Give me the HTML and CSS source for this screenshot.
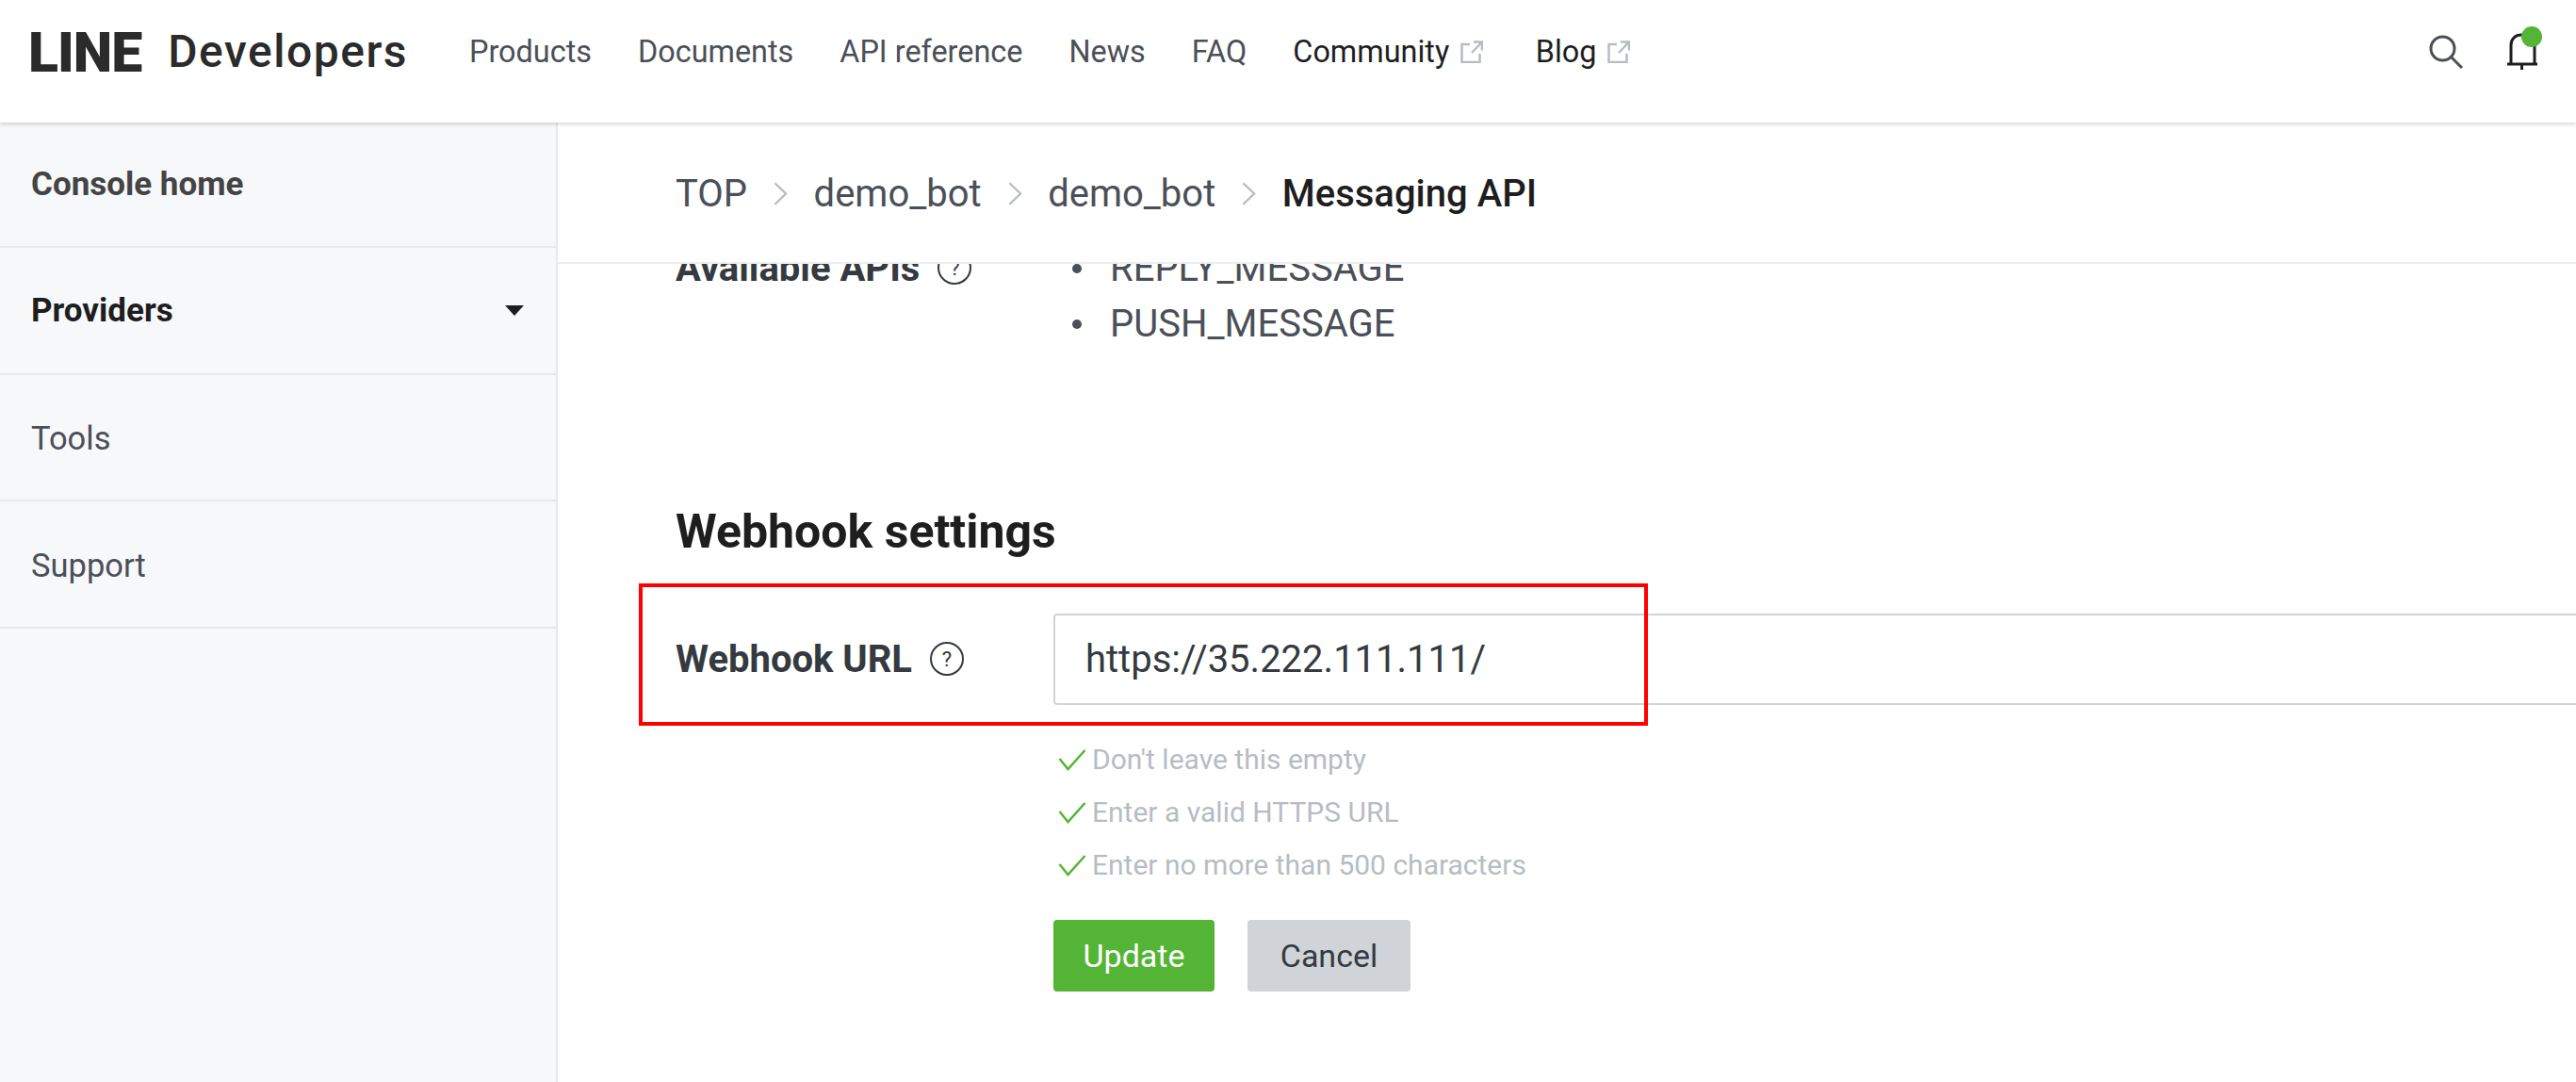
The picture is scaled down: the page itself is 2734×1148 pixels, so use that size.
FILE: index.html
```html
<!DOCTYPE html>
<html lang="en">
<head>
<meta charset="utf-8">
<title>LINE Developers</title>
<link rel="stylesheet" href="styles.css">
</head>
<body>
<header class="topbar">
  <a class="logo"><span class="logo-line">LINE</span><span class="logo-dev">Developers</span></a>
  <nav class="nav">
    <a>Products</a>
    <a>Documents</a>
    <a>API reference</a>
    <a>News</a>
    <a>FAQ</a>
    <a class="ext">Community <svg class="ext-icon" viewBox="0 0 24 24"><path d="M10 4H1.500v19h19v-9M12 13 22.500 2M14 1.500h9v9"/></svg></a>
    <a class="ext">Blog <svg class="ext-icon" viewBox="0 0 24 24"><path d="M10 4H1.500v19h19v-9M12 13 22.500 2M14 1.500h9v9"/></svg></a>
  </nav>
  <div class="tools">
    <svg class="search" viewBox="0 0 36 36"><circle cx="14.500" cy="14.500" r="12.500"/><path d="M23.500 23.500 35 35"/></svg>
    <svg class="bell" viewBox="0 0 38 54"><path d="M1 40h32M5 40V20C5 13 10 9 16 9h3c6 0 11 4 11 11v20M16.500 41v5"/><circle class="bell-dot" cx="27" cy="11" r="11"/></svg>
  </div>
</header>
<div class="shell">
  <aside class="sidebar">
    <a class="side-item strong">Console home</a>
    <a class="side-item active">Providers<span class="caret"></span></a>
    <a class="side-item">Tools</a>
    <a class="side-item">Support</a>
  </aside>
  <main class="main">
    <div class="crumbs">
      <a>TOP</a><svg class="chev" viewBox="0 0 16 26"><path d="M1.500 1 14 13 1.500 25"/></svg>
      <a>demo_bot</a><svg class="chev" viewBox="0 0 16 26"><path d="M1.500 1 14 13 1.500 25"/></svg>
      <a>demo_bot</a><svg class="chev" viewBox="0 0 16 26"><path d="M1.500 1 14 13 1.500 25"/></svg>
      <b>Messaging API</b>
    </div>
    <div class="scroller">
      <section class="content">
        <div class="row api-row">
          <div class="label">Available APIs <span class="help">?</span></div>
          <ul class="apis">
            <li>REPLY_MESSAGE</li>
            <li>PUSH_MESSAGE</li>
          </ul>
        </div>
        <h2 class="title">Webhook settings</h2>
        <div class="row url-row">
          <div class="label url-label">Webhook URL <span class="help">?</span></div>
          <div class="field"><input class="input" type="text" value="https://35.222.111.111/"></div>
          <div class="callout"></div>
        </div>
        <div class="row">
          <div></div>
          <div>
            <ul class="checks">
              <li><svg class="tick" viewBox="0 0 30 24"><path d="M1.500 11 10.500 22 28.500 2"/></svg>Don't leave this empty</li>
              <li><svg class="tick" viewBox="0 0 30 24"><path d="M1.500 11 10.500 22 28.500 2"/></svg>Enter a valid HTTPS URL</li>
              <li><svg class="tick" viewBox="0 0 30 24"><path d="M1.500 11 10.500 22 28.500 2"/></svg>Enter no more than 500 characters</li>
            </ul>
            <div class="actions">
              <button class="btn primary">Update</button>
              <button class="btn">Cancel</button>
            </div>
          </div>
        </div>
      </section>
    </div>
  </main>
</div>
</body>
</html>
```
FILE: styles.css
```css
* { box-sizing: border-box; }
html, body { margin: 0; height: 100%; overflow: hidden; }
body { font-family: Roboto, "Liberation Sans", sans-serif; color: #1e1e1e; background: #fff; display: flex; flex-direction: column; }

.topbar { height: 130px; flex: none; display: flex; align-items: center; padding: 0 36px 20px 30px; background: #fff; box-shadow: 0 2px 4px rgba(0,0,0,.16); position: relative; z-index: 2; }
.logo { display: flex; align-items: center; width: 468px; color: #2b2b2b; }
.logo-line { font-size: 59px; font-weight: 900; letter-spacing: -1px; line-height: 1; }
.logo-dev { font-size: 48px; font-weight: 500; letter-spacing: 1.500px; margin-left: 28px; line-height: 1; }
.nav { display: flex; gap: 49px; font-size: 32.400px; color: #4b5058; }
.nav a { display: flex; align-items: center; gap: 12px; }
.nav .ext { color: #1e1e1e; margin-right: 6.500px; }
.ext-icon { width: 24px; height: 24px; fill: none; stroke: #b7bcc4; stroke-width: 2.500; }
.tools { margin-left: auto; display: flex; align-items: center; gap: 46px; }
.search { width: 36px; height: 36px; fill: none; stroke: #4b5058; stroke-width: 3; }
.bell { width: 38px; height: 54px; fill: none; stroke: #1e1e1e; stroke-width: 3; }
.bell-dot { fill: #54b435; stroke: none; }

.shell { flex: 1; display: flex; min-height: 0; }
.sidebar { width: 592px; flex: none; background: #f7f8fa; border-right: 2px solid #e6e9ed; }
.side-item { height: 134.500px; display: flex; align-items: center; justify-content: space-between; padding: 3px 34px 0 33px; font-size: 34.500px; color: #4b5058; border-bottom: 2px solid #e6e9ed; }
.side-item.strong { font-weight: 700; font-size: 35px; color: #444; height: 133px; padding-top: 0; }
.side-item.active { font-weight: 700; font-size: 35px; color: #1e1e1e; padding-top: 0; }
.caret { width: 0; height: 0; border-left: 10px solid transparent; border-right: 10px solid transparent; border-top: 11px solid #1e1e1e; }

.main { flex: 1; min-width: 0; display: flex; flex-direction: column; }
.crumbs { height: 150px; flex: none; display: flex; align-items: center; padding: 2px 0 0 125px; font-size: 40px; color: #4b5058; border-bottom: 2px solid #eceef0; }
.crumbs b { font-weight: 500; color: #1e1e1e; }
.chev { width: 15px; height: 25px; margin: 0 27.500px 0 28px; fill: none; stroke: #b7bcc4; stroke-width: 2.500; }

.scroller { flex: 1; overflow: hidden; padding-left: 125px; }
.content { margin-top: -25px; width: 2100px; }
.row { display: grid; grid-template-columns: 401px 1fr; position: relative; }
.label { font-size: 40px; font-weight: 700; color: #343a40; display: flex; align-items: center; gap: 19px; }
.api-row { height: 279px; align-items: start; }
.api-row .label { height: 58px; }
.apis { margin: 0; padding: 0 0 0 60px; font-size: 40px; color: #4b5058; line-height: 59px; list-style: none; }
.apis li { position: relative; }
.apis li::before { content: ""; position: absolute; left: -40px; top: 25px; width: 10px; height: 10px; border-radius: 50%; background: #4b5058; }
.help { width: 36px; height: 36px; border: 2.500px solid #343a40; border-radius: 50%; font-size: 22px; font-weight: 400; display: inline-flex; align-items: center; justify-content: center; }
.title { margin: 0 0 56.500px; font-size: 50px; line-height: 60px; font-weight: 700; color: #1e1e1e; }
.url-row { align-items: center; height: 97px; }
.input { width: 100%; height: 97px; border: 2px solid #d0d3d8; border-radius: 4px; padding: 0 32px; font: 400 40px Roboto, sans-serif; color: #343a40; background: #fff; outline: none; }
.callout { position: absolute; left: -39px; top: -32px; width: 1071px; height: 151px; border: 4px solid #f00; pointer-events: none; }
.checks { list-style: none; margin: 30.500px 0 0; padding: 0; font-size: 30px; line-height: 56px; color: #b7bcc4; }
.checks li { display: flex; align-items: center; }
.tick { width: 30px; height: 24px; margin: 0 6px 0 5px; fill: none; stroke: #54b435; stroke-width: 2.500; }
.actions { display: flex; gap: 35px; margin-top: 29.500px; }
.btn { width: 173px; height: 76px; border: 0; border-radius: 4px; background: #d0d3d8; color: #343a40; font: 400 34px Roboto, sans-serif; padding: 0; }
.btn.primary { width: 171px; background: #54b435; color: #fff; }
```
